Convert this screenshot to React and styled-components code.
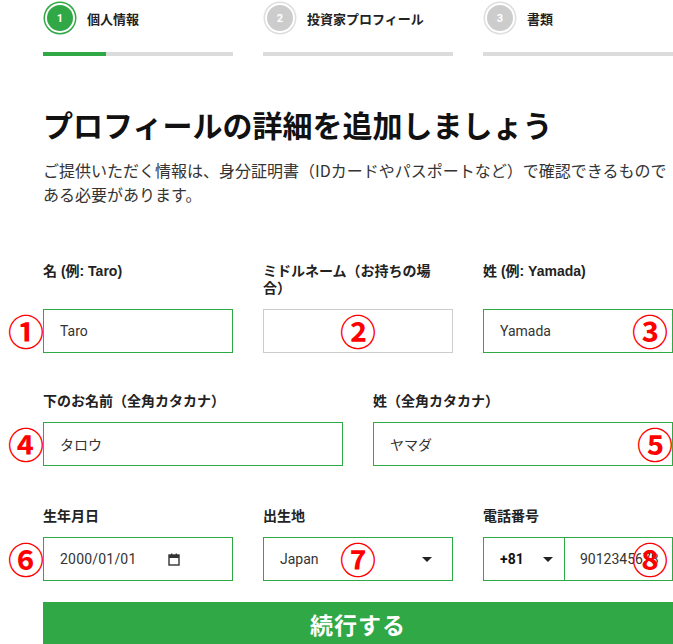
import React from "react";
import styled, { createGlobalStyle } from "styled-components";

const GREEN = "#30a845";

const GlobalStyle = createGlobalStyle`
  html, body {
    margin: 0;
    padding: 0;
    background: #fff;
  }
  body {
    font-family: "Liberation Sans", "Noto Sans CJK JP", sans-serif;
    color: #222;
    overflow: hidden;
  }
`;

const Page = styled.div`
  width: 630px;
  padding: 1px 0 0 43px;
`;

const Stepper = styled.div`
  display: grid;
  grid-template-columns: repeat(3, 190px);
  column-gap: 30px;
`;

const Step = styled.div`
  display: flex;
  flex-direction: column;
`;

const StepHead = styled.div`
  display: flex;
  align-items: center;
  gap: 12px;
  height: 34px;
`;

const StepCircle = styled.div`
  width: 26px;
  height: 26px;
  margin-left: 2px;
  border-radius: 50%;
  background: ${({ $active }) => ($active ? GREEN : "#cccccc")};
  border: 2px solid #fff;
  box-shadow: 0 0 0 1.5px ${({ $active }) => ($active ? GREEN : "#dedede")};
  color: #fff;
  font-family: "Roboto", sans-serif;
  font-size: 11px;
  font-weight: 700;
  display: flex;
  align-items: center;
  justify-content: center;
`;

const StepLabel = styled.span`
  font-family: "Noto Sans CJK JP", sans-serif;
  font-size: 13px;
  font-weight: 700;
  color: #222;
`;

const StepBar = styled.div`
  margin-top: 17px;
  height: 4px;
  background: #dcdcdc;
  overflow: hidden;
`;

const StepFill = styled.div`
  height: 100%;
  background: ${GREEN};
`;

const Title = styled.h1`
  margin: 48px 0 0;
  font-family: "Noto Sans CJK JP", sans-serif;
  font-size: 30px;
  font-weight: 700;
  line-height: 40px;
  color: #111;
`;

const Lead = styled.p`
  margin: 14px 0 0;
  font-family: "Noto Sans CJK JP", sans-serif;
  font-size: 16px;
  line-height: 24px;
  color: #333;
`;

const Row = styled.div`
  display: grid;
  grid-template-columns: ${({ $cols }) => $cols};
  column-gap: 30px;
  margin-top: ${({ $top }) => $top}px;
`;

const Field = styled.div`
  display: flex;
  flex-direction: column;
`;

const Label = styled.label`
  flex: 1;
  margin-bottom: 12px;
  padding-right: 12px;
  font-family: "Liberation Sans", "Noto Sans CJK JP", sans-serif;
  font-size: 14px;
  font-weight: 700;
  line-height: 17px;
  color: #222;
`;

const Control = styled.div`
  position: relative;
  height: 44px;
`;

const TextBox = styled.input`
  box-sizing: border-box;
  width: 100%;
  height: 44px;
  padding: 0 16px;
  border: 1px solid ${({ $muted }) => ($muted ? "#cccccc" : GREEN)};
  border-radius: 0;
  outline: none;
  font-family: "Roboto", "Noto Sans CJK JP", sans-serif;
  font-size: 14px;
  color: #333;
  background: #fff;
`;

const Box = styled.div`
  box-sizing: border-box;
  height: 44px;
  border: 1px solid ${GREEN};
  display: flex;
  align-items: center;
  font-family: "Roboto", "Noto Sans CJK JP", sans-serif;
  font-size: 14px;
  color: #333;
`;

const DateText = styled.span`
  padding-left: 16px;
  width: 108px;
  letter-spacing: 0.2px;
`;

const SelectText = styled.span`
  flex: 1;
  padding-left: 16px;
`;

const Caret = styled.span`
  width: 0;
  height: 0;
  border-left: 5px solid transparent;
  border-right: 5px solid transparent;
  border-top: 5px solid #222;
  margin-right: ${({ $right }) => $right}px;
`;

const CodePart = styled.div`
  box-sizing: border-box;
  width: 81px;
  height: 100%;
  display: flex;
  align-items: center;
  border-right: 1px solid ${GREEN};
`;

const CodeText = styled.span`
  flex: 1;
  padding-left: 16px;
  font-weight: 700;
  color: #111;
`;

const PhoneText = styled.span`
  padding-left: 15px;
  white-space: nowrap;
  overflow: hidden;
`;

const Submit = styled.button`
  display: block;
  width: 100%;
  height: 44px;
  margin-top: 21px;
  border: none;
  background: ${GREEN};
  color: #fff;
  font-family: "Noto Sans CJK JP", sans-serif;
  font-size: 23px;
  font-weight: 700;
  letter-spacing: 1px;
`;

const Badge = styled.span`
  position: absolute;
  top: 50%;
  left: ${({ $x }) => $x}px;
  transform: translate(-50%, -52%);
  color: #ff0000;
  font-family: "Noto Sans CJK JP", sans-serif;
  font-size: 36px;
  font-weight: 700;
  line-height: 1;
  pointer-events: none;
`;

const CalendarIcon = () => (
  <svg width="12" height="13" viewBox="0 0 12 13" fill="none">
    <rect x="1" y="2" width="10" height="10" stroke="#333" strokeWidth="1.4" />
    <rect x="1" y="2" width="10" height="3" fill="#333" />
    <rect x="3" y="0.5" width="1.3" height="2.5" fill="#333" />
    <rect x="7.7" y="0.5" width="1.3" height="2.5" fill="#333" />
  </svg>
);

const steps = [
  { n: 1, label: "個人情報", active: true },
  { n: 2, label: "投資家プロフィール" },
  { n: 3, label: "書類" },
];

export default function App() {
  return (
    <>
      <GlobalStyle />
      <Page>
        <Stepper>
          {steps.map((s) => (
            <Step key={s.n}>
              <StepHead>
                <StepCircle $active={s.active}>{s.n}</StepCircle>
                <StepLabel>{s.label}</StepLabel>
              </StepHead>
              <StepBar>
                <StepFill style={{ width: s.active ? "33%" : "0%" }} />
              </StepBar>
            </Step>
          ))}
        </Stepper>

        <Title>プロフィールの詳細を追加しましょう</Title>
        <Lead>
          ご提供いただく情報は、身分証明書（IDカードやパスポートなど）で確認できるものである必要があります。
        </Lead>

        <Row $cols="repeat(3, 1fr)" $top={57}>
          <Field>
            <Label>名 (例: Taro)</Label>
            <Control>
              <TextBox defaultValue="Taro" />
              <Badge $x={-17}>①</Badge>
            </Control>
          </Field>
          <Field>
            <Label>ミドルネーム（お持ちの場合）</Label>
            <Control>
              <TextBox $muted defaultValue="" />
              <Badge $x={95}>②</Badge>
            </Control>
          </Field>
          <Field>
            <Label>姓 (例: Yamada)</Label>
            <Control>
              <TextBox defaultValue="Yamada" />
              <Badge $x={167}>③</Badge>
            </Control>
          </Field>
        </Row>

        <Row $cols="repeat(2, 1fr)" $top={40}>
          <Field>
            <Label>下のお名前（全角カタカナ）</Label>
            <Control>
              <TextBox defaultValue="タロウ" />
              <Badge $x={-17}>④</Badge>
            </Control>
          </Field>
          <Field>
            <Label>姓（全角カタカナ）</Label>
            <Control>
              <TextBox defaultValue="ヤマダ" />
              <Badge $x={282}>⑤</Badge>
            </Control>
          </Field>
        </Row>

        <Row $cols="repeat(3, 1fr)" $top={42}>
          <Field>
            <Label>生年月日</Label>
            <Control>
              <Box>
                <DateText>2000/01/01</DateText>
                <CalendarIcon />
              </Box>
              <Badge $x={-17}>⑥</Badge>
            </Control>
          </Field>
          <Field>
            <Label>出生地</Label>
            <Control>
              <Box>
                <SelectText>Japan</SelectText>
                <Caret $right={20} />
              </Box>
              <Badge $x={95}>⑦</Badge>
            </Control>
          </Field>
          <Field>
            <Label>電話番号</Label>
            <Control>
              <Box>
                <CodePart>
                  <CodeText>+81</CodeText>
                  <Caret $right={11} />
                </CodePart>
                <PhoneText>9012345678</PhoneText>
              </Box>
              <Badge $x={167}>⑧</Badge>
            </Control>
          </Field>
        </Row>

        <Submit type="button">続行する</Submit>
      </Page>
    </>
  );
}
